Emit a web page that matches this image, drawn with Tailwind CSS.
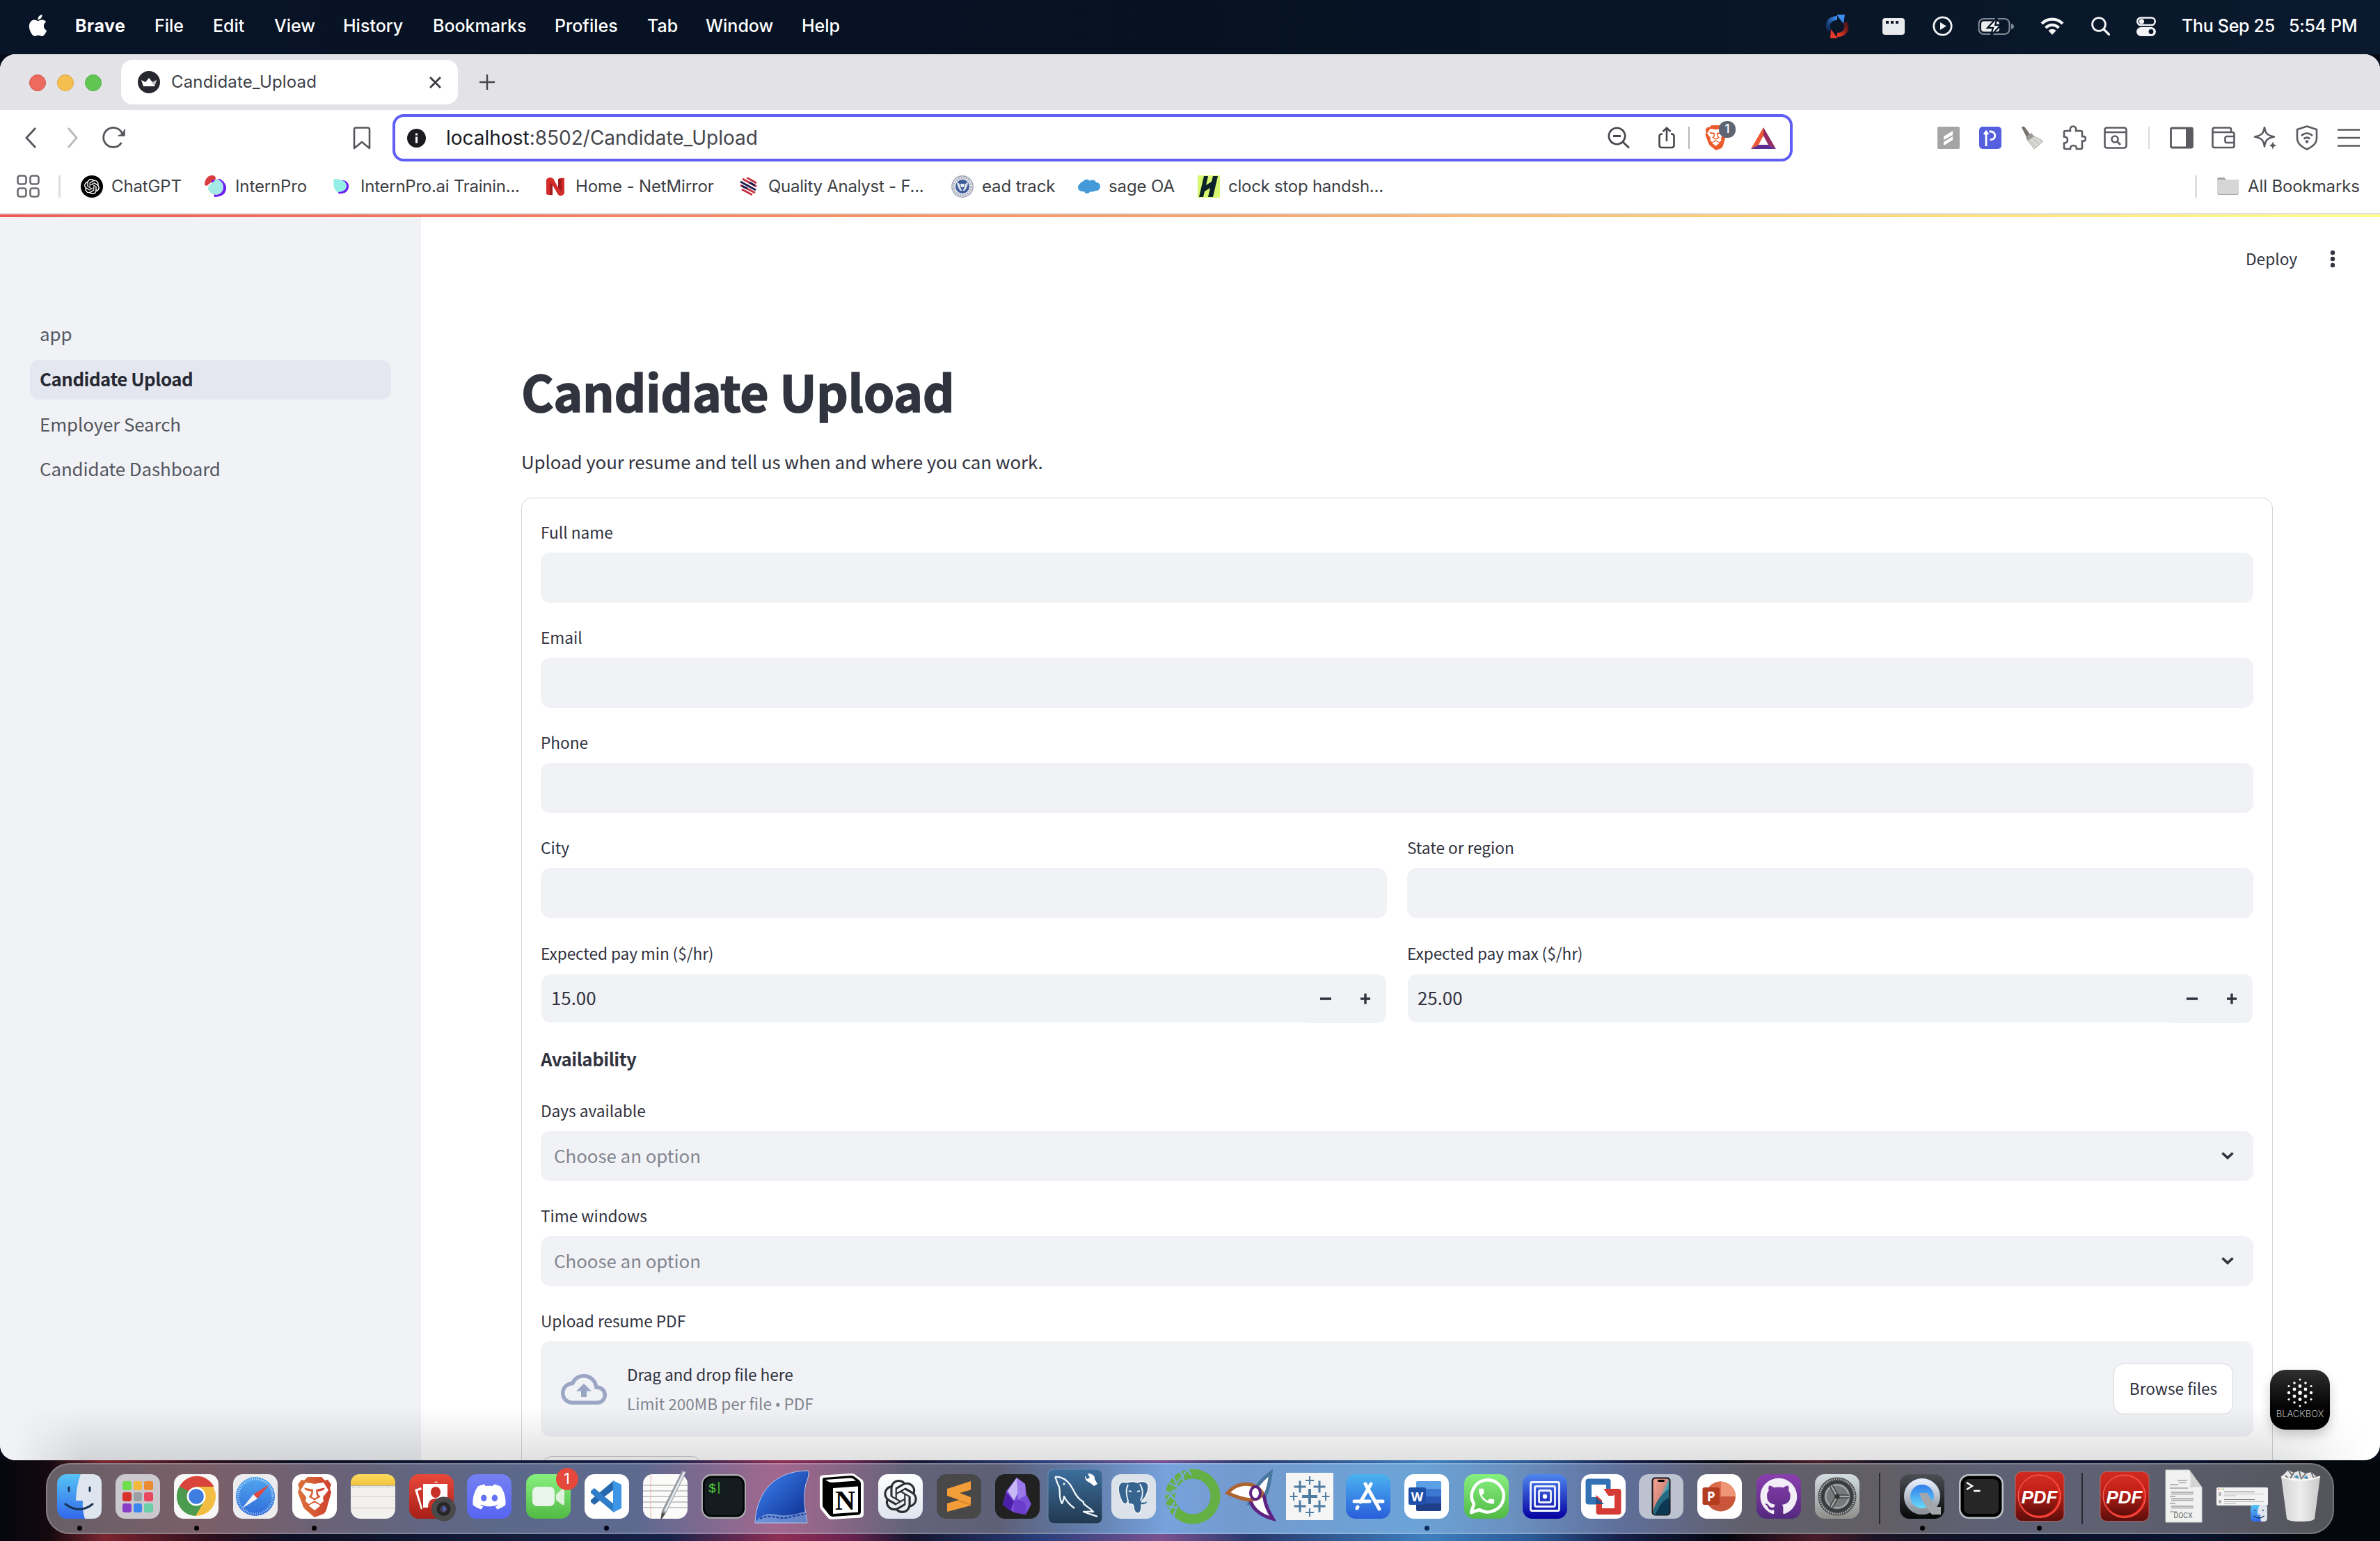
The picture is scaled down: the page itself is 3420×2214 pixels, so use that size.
<!DOCTYPE html>
<html lang="en">
<head>
<meta charset="utf-8">
<title>Candidate_Upload</title>
<script src="https://cdn.jsdelivr.net/npm/@tailwindcss/browser@4"></script>
</head>
<body class="w-[3420px] h-[2214px] overflow-hidden bg-[#070b18] font-['Inter',sans-serif]">
<svg class="absolute size-0" aria-hidden="true">
  <defs>
    <linearGradient id="gFinder" x1="0" y1="0" x2="0" y2="1"><stop offset="0" stop-color="#56c4f6"/><stop offset="1" stop-color="#3268ea"/></linearGradient>
    <linearGradient id="gWhite" x1="0" y1="0" x2="0" y2="1"><stop offset="0" stop-color="#fff"/><stop offset="1" stop-color="#dfe4ee"/></linearGradient>
    <linearGradient id="gRed" x1="0" y1="0" x2="0" y2="1"><stop offset="0" stop-color="#e8483a"/><stop offset="1" stop-color="#a81e18"/></linearGradient>
    <linearGradient id="gPdf" x1="0" y1="0" x2="0" y2="1"><stop offset="0" stop-color="#d22b20"/><stop offset=".4" stop-color="#c02018"/><stop offset="1" stop-color="#5c0d0a"/></linearGradient>
    <linearGradient id="gBlurple" x1="0" y1="0" x2="0" y2="1"><stop offset="0" stop-color="#7480f2"/><stop offset="1" stop-color="#5865f2"/></linearGradient>
    <linearGradient id="gGreen" x1="0" y1="0" x2="0" y2="1"><stop offset="0" stop-color="#86f080"/><stop offset="1" stop-color="#52b944"/></linearGradient>
    <linearGradient id="gStore" x1="0" y1="0" x2="0" y2="1"><stop offset="0" stop-color="#4ab2f0"/><stop offset="1" stop-color="#2a5edb"/></linearGradient>
    <linearGradient id="gVnc" x1="0" y1="0" x2="0" y2="1"><stop offset="0" stop-color="#4f86ee"/><stop offset="1" stop-color="#0500a0"/></linearGradient>
    <linearGradient id="gPurple" x1="0" y1="0" x2="0" y2="1"><stop offset="0" stop-color="#8a3fae"/><stop offset="1" stop-color="#54297f"/></linearGradient>
    <linearGradient id="gSafari" x1="0" y1="0" x2="0" y2="1"><stop offset="0" stop-color="#53a8f0"/><stop offset="1" stop-color="#2f6bd8"/></linearGradient>
    <linearGradient id="gBrave" x1="0" y1="0" x2="1" y2="0"><stop offset="0" stop-color="#d9733a"/><stop offset="1" stop-color="#d0402f"/></linearGradient>
    <linearGradient id="gYellow" x1="0" y1="0" x2="0" y2="1"><stop offset="0" stop-color="#fbdc5e"/><stop offset="1" stop-color="#f3c33c"/></linearGradient>
    <linearGradient id="gShark" x1="0" y1="0" x2="1" y2="1"><stop offset="0" stop-color="#3f86f5"/><stop offset="1" stop-color="#0c2a8c"/></linearGradient>
    <linearGradient id="gSql" x1="0" y1="0" x2="0" y2="1"><stop offset="0" stop-color="#3c6f9e"/><stop offset="1" stop-color="#22384f"/></linearGradient>
    <linearGradient id="gPhone" x1="0" y1="0" x2="1" y2="1"><stop offset="0" stop-color="#f5a393"/><stop offset=".45" stop-color="#d98a80"/><stop offset=".55" stop-color="#49a3b5"/><stop offset="1" stop-color="#0b3350"/></linearGradient>
    <linearGradient id="gSys" x1="0" y1="0" x2="0" y2="1"><stop offset="0" stop-color="#d3dde2"/><stop offset="1" stop-color="#8f8f8b"/></linearGradient>
    <linearGradient id="gQt" x1="0" y1="0" x2="0" y2="1"><stop offset="0" stop-color="#4b4f54"/><stop offset="1" stop-color="#060708"/></linearGradient>
    <linearGradient id="gQr" x1="0" y1="0" x2="0" y2="1"><stop offset="0" stop-color="#e4ecfb"/><stop offset="1" stop-color="#8d9299"/></linearGradient>
    <linearGradient id="gQc" x1="0" y1="0" x2="0" y2="1"><stop offset="0" stop-color="#2a72e8"/><stop offset="1" stop-color="#6fe6fb"/></linearGradient>
    <linearGradient id="gTrash" x1="0" y1="0" x2="1" y2="0"><stop offset="0" stop-color="#d4d4d4"/><stop offset=".5" stop-color="#ededed"/><stop offset="1" stop-color="#c9c9c9"/></linearGradient>
    <linearGradient id="gSyncA" x1="0" y1="1" x2="1" y2="0"><stop offset="0" stop-color="#0c2550"/><stop offset="1" stop-color="#3b8bf0"/></linearGradient>
    <linearGradient id="gSyncB" x1="1" y1="0" x2="0" y2="1"><stop offset="0" stop-color="#4a1214"/><stop offset="1" stop-color="#ef3a26"/></linearGradient>
    <symbol id="knot" viewBox="0 0 24 24"><path d="M22.2819 9.8211a5.9847 5.9847 0 0 0-.5157-4.9108 6.0462 6.0462 0 0 0-6.5098-2.9A6.0651 6.0651 0 0 0 4.9807 4.1818a5.9847 5.9847 0 0 0-3.9977 2.9 6.0462 6.0462 0 0 0 .7427 7.0966 5.98 5.98 0 0 0 .511 4.9107 6.051 6.051 0 0 0 6.5146 2.9001A5.9847 5.9847 0 0 0 13.2599 24a6.0557 6.0557 0 0 0 5.7718-4.2058 5.9894 5.9894 0 0 0 3.9977-2.9001 6.0557 6.0557 0 0 0-.7475-7.0729zm-9.022 12.6081a4.4755 4.4755 0 0 1-2.8764-1.0408l.1419-.0804 4.7783-2.7582a.7948.7948 0 0 0 .3927-.6813v-6.7369l2.02 1.1686a.071.071 0 0 1 .038.052v5.5826a4.504 4.504 0 0 1-4.4945 4.4944zm-9.6607-4.1254a4.4708 4.4708 0 0 1-.5346-3.0137l.142.0852 4.783 2.7582a.7712.7712 0 0 0 .7806 0l5.8428-3.3685v2.3324a.0804.0804 0 0 1-.0332.0615L9.74 19.9502a4.4992 4.4992 0 0 1-6.1408-1.6464zM2.3408 7.8956a4.485 4.485 0 0 1 2.3655-1.9728V11.6a.7664.7664 0 0 0 .3879.6765l5.8144 3.3543-2.0201 1.1685a.0757.0757 0 0 1-.071 0l-4.8303-2.7865A4.504 4.504 0 0 1 2.3408 7.872zm16.5963 3.8558L13.1038 8.364 15.1192 7.2a.0757.0757 0 0 1 .071 0l4.8303 2.7913a4.4944 4.4944 0 0 1-.6765 8.1042v-5.6772a.79.79 0 0 0-.407-.667zm2.0107-3.0231l-.142-.0852-4.7735-2.7818a.7759.7759 0 0 0-.7854 0L9.409 9.2297V6.8974a.0662.0662 0 0 1 .0284-.0615l4.8303-2.7866a4.4992 4.4992 0 0 1 6.6802 4.66zM8.3065 12.863l-2.02-1.1638a.0804.0804 0 0 1-.038-.0567V6.0742a4.4992 4.4992 0 0 1 7.3757-3.4537l-.142.0805L8.704 5.459a.7948.7948 0 0 0-.3927.6813zm1.0976-2.3654l2.602-1.4998 2.6069 1.4998v2.9994l-2.5974 1.4997-2.6067-1.4997Z"/></symbol>
    <symbol id="lion" viewBox="0 0 50 58">
      <path d="M15 0h20l5 5 4-1 5 7-2 5 2 6-7 25c-1 3-2 4-4 6L25 58 12 47c-2-2-3-3-4-6L1 22l2-6-2-5 5-7 4 1z"/>
      <path fill="#fff" d="M12 8l8 1 5 1 5-1 8-1 7 11-8 10 1 6-5 4-8-5-8 5-5-4 1-6-8-10z"/>
      <path d="M10 15.500l11 2-1 3.500-8-2zM40 15.500l-11 2 1 3.500 8-2zM20.500 18h2.500l-.5 7-2 3 4.500 3 4.500-3-2-3-.5-7h2.500l.5 6.500 3.500 4-8.500 5-8.500-5 3.500-4z"/>
      <path fill="#fff" d="M25 36.500l8.500 4.500L25 48l-8.500-7z"/>
    </symbol>
    <symbol id="chev" viewBox="0 0 20 12"><path d="M2.500 2.500 10 9.500l7.500-7" fill="none" stroke="#31333f" stroke-width="3.600" stroke-linecap="butt"/></symbol>
  </defs>
</svg>

<div class="relative flex h-full w-full flex-col">

  <!-- macOS menu bar -->
  <header class="flex h-[78px] w-full shrink-0 items-center bg-linear-to-r from-[#081427] via-[#061222] to-[#0a192d] pb-[9px] text-[25px] leading-none font-medium text-white">
    <div class="w-[108px] pl-[39px] pt-[4px]"><svg class="size-[31px]" viewBox="0 0 24 24" fill="#fff"><path d="M12.152 6.896c-.948 0-2.415-1.078-3.96-1.04-2.04.027-3.91 1.183-4.961 3.014-2.117 3.675-.546 9.103 1.519 12.09 1.013 1.454 2.208 3.09 3.792 3.039 1.52-.065 2.09-.987 3.935-.987 1.831 0 2.35.987 3.96.948 1.637-.026 2.676-1.48 3.676-2.948 1.156-1.688 1.636-3.325 1.662-3.415-.039-.013-3.182-1.221-3.22-4.857-.026-3.04 2.48-4.494 2.597-4.559-1.429-2.09-3.623-2.324-4.39-2.376-2-.156-3.675 1.09-4.61 1.09zM15.53 3.83c.843-1.012 1.4-2.427 1.245-3.83-1.207.052-2.662.805-3.532 1.818-.78.896-1.454 2.338-1.273 3.714 1.338.104 2.715-.688 3.559-1.701"/></svg></div>
    <span class="w-[114px] pt-[5px] font-bold tracking-[0.5px]">Brave</span>
    <span class="w-[84px] pt-[5px]">File</span>
    <span class="w-[88px] pt-[5px]">Edit</span>
    <span class="w-[99px] pt-[5px]">View</span>
    <span class="w-[129px] pt-[5px]">History</span>
    <span class="w-[175px] pt-[5px]">Bookmarks</span>
    <span class="w-[133px] pt-[5px]">Profiles</span>
    <span class="w-[84px] pt-[5px]">Tab</span>
    <span class="w-[138px] pt-[5px]">Window</span>
    <span class="w-[90px] pt-[5px]">Help</span>
    <div class="ml-auto flex items-center pt-[6px]">
      <svg class="mr-[48px] h-[36px] w-[34px]" viewBox="0 0 34 36"><path d="M5 24C1 14 6 6 17 6" fill="none" stroke="url(#gSyncA)" stroke-width="6"/><path d="M16 1l12 0-2 13z" fill="#3d8bee"/><path d="M29 12c4 10-1 18-12 18" fill="none" stroke="url(#gSyncB)" stroke-width="6"/><path d="M18 35l-11 0 1-13z" fill="#e8392a"/></svg>
      <svg class="mr-[40px] h-[26px] w-[32px]" viewBox="0 0 32 26"><rect y="1" width="32" height="24" rx="4" fill="#e9eaec"/><g fill="#0a172a"><rect x="5" y="5" width="4" height="4"/><rect x="12" y="5" width="4" height="4"/><rect x="19" y="5" width="4" height="4"/></g></svg>
      <svg class="mr-[36px] size-[29px]" viewBox="0 0 29 29"><circle cx="14.500" cy="14.500" r="12.700" fill="none" stroke="#f3f4f5" stroke-width="2.800"/><path d="M11 9l9 5.500-9 5.500z" fill="#f3f4f5"/></svg>
      <svg class="mr-[38px] h-[28px] w-[52px]" viewBox="0 0 52 28"><rect x="1.500" y="3" width="44" height="22" rx="7" fill="none" stroke="#7f8893" stroke-width="2.200"/><rect x="5" y="6.500" width="26" height="15" rx="4" fill="#eee"/><path d="M48 10v8c3-1 4-2 4-4s-1-3-4-4z" fill="#7f8893"/><path d="M28 1 14 16h8l-3 11 14-15h-8z" fill="#fff" stroke="#08162a" stroke-width="2.400"/></svg>
      <svg class="mr-[39px] h-[27px] w-[34px]" viewBox="0 0 34 27"><g fill="none" stroke="#f3f4f5" stroke-width="4.200"><path d="M2 10c8-8.500 22-8.500 30 0"/><path d="M7.500 16c5.500-5.500 13.500-5.500 19 0"/></g><path d="M17 26l-5.500-6c3-3 8-3 11 0z" fill="#f3f4f5"/></svg>
      <svg class="mr-[38px] size-[27px]" viewBox="0 0 27 27"><circle cx="11" cy="11" r="9.400" fill="none" stroke="#f3f4f5" stroke-width="2.800"/><path d="M18 18l7.500 7.500" stroke="#f3f4f5" stroke-width="3.200" stroke-linecap="round"/></svg>
      <svg class="mr-[37px] h-[28px] w-[28px]" viewBox="0 0 28 28"><rect x="1.300" y="1.500" width="25.400" height="10.500" rx="5.200" fill="none" stroke="#f3f4f5" stroke-width="2.600"/><circle cx="7.500" cy="6.800" r="3.600" fill="#f3f4f5"/><rect y="15" width="28" height="13" rx="6.500" fill="#f3f4f5"/><circle cx="21" cy="21.500" r="3.400" fill="#08162a"/></svg>
      <span class="w-[154px] tracking-[-0.3px] whitespace-nowrap">Thu Sep 25</span><span class="w-[131px] tracking-[-0.3px] whitespace-nowrap">5:54 PM</span>
    </div>
  </header>

  <!-- Browser window -->
  <div class="relative flex h-[2020px] w-full shrink-0 flex-col overflow-hidden rounded-[22px] bg-white">

    <!-- Tab strip -->
    <div class="flex h-[80px] shrink-0 items-center border-t border-white bg-[#e3e2e7] pl-[42px]">
      <div class="flex w-[132px] gap-[16px]">
        <i class="size-[24px] rounded-full border border-[#d5544a] bg-[#ed6a5e]"></i>
        <i class="size-[24px] rounded-full border border-[#dba63c] bg-[#f4bf4f]"></i>
        <i class="size-[24px] rounded-full border border-[#50b143] bg-[#61c554]"></i>
      </div>
      <div class="-mt-px flex h-[64px] w-[484px] items-center rounded-[16px] bg-white pl-[24px]">
        <svg class="size-[32px]" viewBox="0 0 32 32"><circle cx="16" cy="16" r="16" fill="#26272f"/><path d="M5 13l6 3 5-6 5 6 6-3-3 9H8z" fill="#fff"/><path d="M16 10l5 6 6-3-3 9z" fill="#bdbdbd"/></svg>
        <span class="ml-[16px] w-[371px] text-[24px] tracking-[0.15px] text-[#3e3f45]">Candidate_Upload</span>
        <svg class="size-[17px]" viewBox="0 0 16 16"><path d="M1 1l14 14M15 1 1 15" stroke="#3a3b40" stroke-width="2.600"/></svg>
      </div>
      <svg class="-mt-px ml-[31px] size-[22px]" viewBox="0 0 22 22"><path d="M11 0v22M0 11h22" stroke="#46474c" stroke-width="2.400"/></svg>
    </div>

    <!-- Toolbar -->
    <div class="flex h-[80px] shrink-0 items-center">
      <div class="flex w-[564px] items-center">
        <svg class="ml-[35px] h-[32px] w-[18px]" viewBox="0 0 18 32"><path d="M16 2 3 16l13 14" fill="none" stroke="#55565c" stroke-width="2.800"/></svg>
        <svg class="ml-[43px] h-[32px] w-[18px]" viewBox="0 0 18 32"><path d="M2 2l12 14L2 30" fill="none" stroke="#b9b9bd" stroke-width="2.800"/></svg>
        <svg class="ml-[32px] size-[34px]" viewBox="0 0 34 34"><path d="M28.500 24A14 14 0 1 1 30 12" fill="none" stroke="#55565c" stroke-width="2.800"/><path d="M33 5v9H24q7-1 9-9z" fill="#55565c" stroke="#55565c" stroke-width="1.500" stroke-linejoin="round"/></svg>
        <svg class="ml-[327px] h-[33px] w-[26px]" viewBox="0 0 26 33"><path d="M2 4q0-2.500 2.500-2.500h17Q24 1.500 24 4v27l-11-9-11 9z" fill="none" stroke="#55565c" stroke-width="2.600" stroke-linejoin="round"/></svg>
      </div>
      <div class="flex h-[68px] w-[2012px] shrink-0 items-center rounded-[16px] border-4 border-[#5f5ef5] pl-[17px]">
        <svg class="size-[27px]" viewBox="0 0 27 27"><circle cx="13.500" cy="13.500" r="13.500" fill="#1c1b20"/><path d="M13.500 6.500v3M13.500 11.500v9" stroke="#fff" stroke-width="3"/></svg>
        <span class="ml-[29px] w-[1669px] text-[28px] text-[#45464c]"><span class="text-[#1b1b1f]">localhost</span>:8502/Candidate_Upload</span>
        <svg class="h-[32px] w-[32px]" viewBox="0 0 32 32"><circle cx="13.500" cy="13.500" r="11.700" fill="none" stroke="#46474c" stroke-width="2.600"/><path d="M8 13.500h11M22 22l9 8.500" stroke="#46474c" stroke-width="2.800"/></svg>
        <svg class="ml-[40px] h-[32px] w-[26px]" viewBox="0 0 26 32"><path d="M7 10.500H6Q2.500 10.500 2.500 14v12.500Q2.500 30 6 30h14q3.500 0 3.500-3.500V14q0-3.500-3.500-3.500h-1M13 21V2M7.500 7 13 1.800 18.500 7" fill="none" stroke="#46474c" stroke-width="2.600"/></svg>
        <i class="ml-[18px] h-[32px] w-[2px] bg-[#b9b9bd]"></i>
        <div class="relative ml-[22px] h-[36px] w-[31px]">
          <svg class="h-[36px] w-[31px]" fill="#ec5c2b"><use href="#lion"/></svg>
          <span class="absolute -top-[6px] left-[20px] flex size-[24px] items-center justify-center rounded-[11px] bg-[#5f6472] text-[17px] font-medium text-white">1</span>
        </div>
        <svg class="ml-[35px] h-[31px] w-[36px]" viewBox="0 0 36 31"><path d="M18 0 0 31l11-6 7-13z" fill="#ee5733"/><path d="M18 0l18 31-11-6-7-13z" fill="#932a61"/><path d="M0 31h36l-11-6H11z" fill="#5e2c8e"/></svg>
      </div>
      <div class="flex flex-1 items-center pl-[208px]">
        <svg class="mr-[28px] size-[32px]" viewBox="0 0 32 32"><rect width="32" height="32" rx="2" fill="#a5a5a5"/><path d="M22 6 9 14v5l13-7zM22 14 9 22v5l13-8z" fill="#fff"/></svg>
        <svg class="mr-[27px] size-[32px]" viewBox="0 0 32 32"><rect width="32" height="32" rx="5" fill="#5460de"/><path d="M10 28V9M7 11l3-4 3 4M14.500 7H17a5.800 5.800 0 0 1 0 11.600h-1.500" fill="none" stroke="#fff" stroke-width="2.800"/></svg>
        <svg class="mr-[27px] size-[34px]" viewBox="0 0 34 34"><path d="M2 2q2-3 5 0l7 10-5 4z" fill="#77736c"/><path d="M8 16l8-6 4 5-9 7z" fill="#9b9994"/><path d="M11 21l9-6c5 2 9 4 13 7L20 33c-2-4-6-7-9-12z" fill="#d8d8d4" stroke="#a7a7a3"/><path d="M15 22l7 8M19 19l8 7" stroke="#b4b4af"/></svg>
        <svg class="mr-[25px] h-[36px] w-[34px]" viewBox="0 0 34 36"><path d="M4 8h7c-1-4 1-6.500 4-6.500S20 4 19 8h7q2 0 2 2v6c3.500-.5 5 1 5 3.500S31.500 23 28 22.500V32q0 2-2 2h-6c0-3-1.500-5-4.500-5S11 31 11 34H4q-2 0-2-2v-6.500c3 0 5-1.500 5-4.500s-2-4.500-5-4.500V10q0-2 2-2z" fill="none" stroke="#5a5b61" stroke-width="2.600"/></svg>
        <svg class="mr-[30px] h-[32px] w-[34px]" viewBox="0 0 34 32"><rect x="1.500" y="1.500" width="31" height="29" rx="3" fill="none" stroke="#5a5b61" stroke-width="2.600"/><path d="M2 8h30" stroke="#5a5b61" stroke-width="2.400"/><circle cx="16" cy="18" r="4.500" fill="none" stroke="#5a5b61" stroke-width="2.600"/><path d="M19 21l5 5" stroke="#5a5b61" stroke-width="2.800"/></svg>
        <i class="mr-[29px] h-[32px] w-[2px] bg-[#d9d9de]"></i>
        <svg class="mr-[26px] h-[32px] w-[34px]" viewBox="0 0 34 32"><rect x="1.500" y="2" width="31" height="28" rx="2" fill="none" stroke="#5a5b61" stroke-width="2.800"/><rect x="23" y="2" width="10" height="28" fill="#5a5b61"/></svg>
        <svg class="mr-[26px] h-[32px] w-[34px]" viewBox="0 0 34 32"><path d="M28 8V4q0-2.500-2.500-2.500H4Q1.500 1.500 1.500 4v23Q1.500 30 4 30h26q2.500 0 2.500-2.500v-17Q32.500 8 30 8H4Q1.500 8 1.500 5.500M32 14H22q-2.500 0-2.500 2.500v4Q19.500 23 22 23h10" fill="none" stroke="#5a5b61" stroke-width="2.600"/></svg>
        <svg class="mr-[27px] h-[36px] w-[34px]" viewBox="0 0 34 36"><path d="M16 3c1.500 9 4 11.500 14 13.500-10 2-12.500 4.500-14 14-1.500-9.500-4-12-14-14C12 14.500 14.500 12 16 3z" fill="none" stroke="#5a5b61" stroke-width="2.600" stroke-linejoin="round"/><path d="M28 23c.8 4 2 5.200 6 6-4 .8-5.200 2-6 6-.8-4-2-5.200-6-6 4-.8 5.200-2 6-6z" fill="#5a5b61"/></svg>
        <svg class="mr-[28px] h-[36px] w-[32px]" viewBox="0 0 32 36"><path d="M16 1.500 30 6v12c0 8-5 12-14 16.500C7 30 2 26 2 18V6z" fill="none" stroke="#5a5b61" stroke-width="2.600" stroke-linejoin="round"/><path d="M8 15c5-4.500 11-4.500 16 0M11.500 19.500c3-2.500 6-2.500 9 0" fill="none" stroke="#5a5b61" stroke-width="2.600"/><circle cx="16" cy="23.500" r="2.300" fill="#5a5b61"/></svg>
        <svg class="h-[28px] w-[32px]" viewBox="0 0 32 28"><path d="M0 2.500h32M0 14h32M0 25.500h32" stroke="#5a5b61" stroke-width="2.600"/></svg>
      </div>
    </div>

    <!-- Bookmarks bar -->
    <div class="flex h-[70px] shrink-0 items-center border-b-2 border-[#dfdfe4] pb-[9px] text-[24px] tracking-[-0.12px] whitespace-nowrap text-[#3e3f45]">
      <svg class="ml-[24px] size-[33px]" viewBox="0 0 33 33"><g fill="none" stroke="#6a6b70" stroke-width="2.600"><rect x="1.500" y="1.500" width="12" height="12" rx="3"/><rect x="19.500" y="1.500" width="12" height="12" rx="3"/><rect x="1.500" y="19.500" width="12" height="12" rx="3"/><rect x="19.500" y="19.500" width="12" height="12" rx="3"/></g></svg>
      <i class="ml-[27px] h-[32px] w-[3px] bg-[#dedee3]"></i>
      <svg class="ml-[29px] size-[32px]" viewBox="0 0 32 32"><circle cx="16" cy="16" r="16"/><svg x="5" y="5" width="22" height="22" fill="#fff"><use href="#knot"/></svg></svg>
      <span class="ml-[12px] w-[133px]">ChatGPT</span>
      <svg class="size-[33px]" viewBox="0 0 33 33"><path d="M1 15C1 7 5 1 12 1c4 0 5 3 5 5L4 16z" fill="#dc3b3f"/><path d="M11 8l12-2c6 4 9 8 9 13 0 8-6 13-17 13z" fill="#6c1cf2"/><path d="M6 17 18 6c7 2 10 7 10 12 0 6-4 10-10 11C10 28 5 24 6 17z" fill="#a6eae8"/></svg>
      <span class="ml-[12px] w-[140px]">InternPro</span>
      <svg class="mt-px h-[22px] w-[24px]" viewBox="0 0 24 22"><path d="M10 2c9-1 14 4 13 10-1 7-7 10-15 9z" fill="#6c1cf2"/><path d="M2 0c11 0 18 4 18 10s-6 9-13 9C2 16 0 8 2 0z" fill="#93eee6"/></svg>
      <span class="ml-[16px] w-[266px] tracking-[-0.25px]">InternPro.ai Trainin...</span>
      <svg class="h-[28px] w-[28px]" viewBox="0 0 28 28"><path d="M1 4c2-3 6-4 9-2q2 1 3 4l5 9V3q4-2 9-1v20q0 4-4 5-4 1-6-3L10 12v14q-5 1-9-1z" fill="#d42c2b"/><path d="M18 3v12l-6-11z" fill="#fff"/><path d="M18 3h5v19l-5-7zM10 12v14h-4V8z" fill="#a01b1c"/></svg>
      <span class="ml-[15px] w-[236px]">Home - NetMirror</span>
      <svg class="h-[26px] w-[26px]" viewBox="0 0 26 26"><g stroke-width="2.600"><path d="M10 0l14 8M4 2l20 11" stroke="#c22b40"/><path d="M1 6l22 12" stroke="#171c4c"/><path d="M1 11l21 11M3 17l15 8" stroke="#c22b40"/><path d="M14 7l8 4.500M3 12l8 4" stroke="#171c4c"/></g></svg>
      <span class="ml-[15px] w-[263px] tracking-[-0.25px]">Quality Analyst - F...</span>
      <svg class="size-[32px]" viewBox="0 0 32 32"><circle cx="16" cy="16" r="15.200" fill="#e9e9ee" stroke="#9fa4b4" stroke-width="1.400"/><circle cx="16" cy="16" r="12.500" fill="none" stroke="#9aa2b8" stroke-width="2" stroke-dasharray="2 1.500"/><circle cx="16" cy="16" r="10" fill="#3d5c98"/><path d="M8 10q5 1 5 7l3 6 3-6q0-6 5-7-1 8-5 12h-6q-4-4-5-12z" fill="#dfe3ec"/><path d="M13 12h6l-1 5h-4z" fill="#e9ecf2"/></svg>
      <span class="ml-[12px] w-[138px]">ead track</span>
      <svg class="h-[22px] w-[32px]" viewBox="0 0 32 22"><path d="M7 4c3-4 8-4 10-1 4-3 8-1 9 2 4 0 6 3 6 6 0 4-4 7-8 6-2 2-5 2-6 1-3 4-8 4-9 0-5 1-9-2-9-6 0-2 1-4 3-5 0-1 2-3 4-3z" fill="#449ad8"/></svg>
      <span class="ml-[12px] w-[128px]">sage OA</span>
      <svg class="size-[32px]" viewBox="0 0 32 32"><rect width="32" height="32" fill="#d9f871"/><path d="M9 1h6l-3 13 8-5 2-8h7l-7 30h-7l3-13-8 5-2 8H2z" fill="#0c2229"/></svg>
      <span class="ml-[12px] tracking-[-0.25px]">clock stop handsh...</span>
      <i class="ml-auto h-[32px] w-[3px] bg-[#dedee3]"></i>
      <svg class="ml-[29px] h-[27px] w-[31px]" viewBox="0 0 31 27"><path d="M0 4q0-3 3-3h7l3 3h15q3 0 3 3v16q0 3-3 3H3q-3 0-3-3z" fill="#a4a4a4"/><path d="M0 4h31v18q0 3-3 3H3q-3 0-3-3z" fill="#d6d6d6"/></svg>
      <span class="ml-[13px] w-[190px]">All Bookmarks</span>
    </div>

    <!-- Streamlit page -->
    <div class="h-[4px] shrink-0 bg-linear-to-r from-[#ef5b54] via-[#f4a26d] to-[#ffff8a]"></div>
    <div class="flex min-h-0 flex-1 font-['Noto_Sans_CJK_SC','Source_Sans_Pro',sans-serif] text-[#31333f]">
      <aside class="w-[605px] shrink-0 bg-[#f0f2f6] px-[43px] pt-[140px] text-[25.9px] leading-[54px] tracking-[-0.1px] text-[#545660]">
        <nav class="flex flex-col gap-[7.800px]">
          <a class="h-[57px] pl-[14px]">app</a>
          <a class="h-[57px] rounded-[14px] bg-[#e4e7ef] pl-[14px] font-bold tracking-[-0.5px] text-[#262833]">Candidate Upload</a>
          <a class="h-[57px] pl-[14px]">Employer Search</a>
          <a class="h-[57px] pl-[14px]">Candidate Dashboard</a>
        </nav>
      </aside>
      <main class="flex-1 pl-[144px]">
        <div class="flex h-[104px] items-center pt-[16px]">
          <span class="ml-auto w-[121px] text-[22.7px]">Deploy</span>
          <svg class="mr-[64px] h-[26px] w-[8px]" viewBox="0 0 8 26" fill="#31333f"><circle cx="4" cy="4" r="3.200"/><circle cx="4" cy="13" r="3.200"/><circle cx="4" cy="22" r="3.200"/></svg>
        </div>
        <h1 class="mt-[93px] h-[104px] text-[71.300px] leading-[104px] font-bold tracking-[-0.4px] [-webkit-text-stroke:1.600px_#31333f]">Candidate Upload</h1>
        <p class="mt-[27px] h-[46px] text-[25.900px] leading-[46px] tracking-[-0.07px]">Upload your resume and tell us when and where you can work.</p>
        <form class="mt-[29px] h-[1500px] w-[2517px] rounded-[15px] border border-[#d5d6d9] px-[27px] pt-[28px] text-[22.700px] tracking-[-0.04px]">
          <div class="h-[151px]"><label class="block h-[50px] leading-[41px]">Full name</label><div class="h-[72px] rounded-[14px] bg-[#f0f2f6]"></div></div>
          <div class="h-[151px]"><label class="block h-[50px] leading-[41px]">Email</label><div class="h-[72px] rounded-[14px] bg-[#f0f2f6]"></div></div>
          <div class="h-[151px]"><label class="block h-[50px] leading-[41px]">Phone</label><div class="h-[72px] rounded-[14px] bg-[#f0f2f6]"></div></div>
          <div class="grid h-[151px] grid-cols-2 gap-[29px]">
            <div><label class="block h-[50px] leading-[41px]">City</label><div class="h-[72px] rounded-[14px] bg-[#f0f2f6]"></div></div>
            <div><label class="block h-[50px] leading-[41px]">State or region</label><div class="h-[72px] rounded-[14px] bg-[#f0f2f6]"></div></div>
          </div>
          <div class="grid h-[151px] grid-cols-2 gap-[29px]">
            <div>
              <label class="block h-[52px] leading-[43px] tracking-[-0.1px]">Expected pay min ($/hr)</label>
              <div class="mx-px flex h-[69px] rounded-[13px] bg-[#f0f2f6]">
                <span class="flex-1 pl-[14px] text-[25.900px] leading-[66px]">15.00</span>
                <div class="flex h-[70px] w-[116px] items-center rounded-r-[13px] bg-[#f0f2f6] pl-[21px]">
                  <svg class="h-[16px] w-[16px]" viewBox="0 0 16 16"><path d="M0 8h16" stroke="#31333f" stroke-width="3.600"/></svg>
                  <svg class="ml-[42px] h-[16px] w-[14px]" viewBox="0 0 14 16"><path d="M0 8h14M7 .5v15" stroke="#31333f" stroke-width="3.400"/></svg>
                </div>
              </div>
            </div>
            <div>
              <label class="block h-[52px] leading-[43px] tracking-[-0.1px]">Expected pay max ($/hr)</label>
              <div class="mx-px flex h-[69px] rounded-[13px] bg-[#f0f2f6]">
                <span class="flex-1 pl-[14px] text-[25.900px] leading-[66px]">25.00</span>
                <div class="flex h-[70px] w-[116px] items-center rounded-r-[13px] bg-[#f0f2f6] pl-[21px]">
                  <svg class="h-[16px] w-[16px]" viewBox="0 0 16 16"><path d="M0 8h16" stroke="#31333f" stroke-width="3.600"/></svg>
                  <svg class="ml-[42px] h-[16px] w-[14px]" viewBox="0 0 14 16"><path d="M0 8h14M7 .5v15" stroke="#31333f" stroke-width="3.400"/></svg>
                </div>
              </div>
            </div>
          </div>
          <p class="h-[76px] text-[25.900px] leading-[43px] font-bold tracking-[-0.5px]">Availability</p>
          <div class="h-[151px]"><label class="block h-[50px] leading-[41px]">Days available</label><div class="flex h-[72px] items-center justify-between rounded-[14px] bg-[#f0f2f6] pr-[27px] pl-[19px] text-[25.900px] text-[#83858e]"><span class="mb-[3px] leading-[68px]">Choose an option</span><svg class="mb-[2px] h-[12px] w-[20px]"><use href="#chev"/></svg></div></div>
          <div class="h-[151px]"><label class="block h-[50px] leading-[41px]">Time windows</label><div class="flex h-[72px] items-center justify-between rounded-[14px] bg-[#f0f2f6] pr-[27px] pl-[19px] text-[25.900px] text-[#83858e]"><span class="mb-[3px] leading-[68px]">Choose an option</span><svg class="mb-[2px] h-[12px] w-[20px]"><use href="#chev"/></svg></div></div>
          <label class="block h-[50px] leading-[41px]">Upload resume PDF</label>
          <div class="flex h-[137px] items-center rounded-[14px] bg-[#f0f2f6] pr-[29px] pl-[29px]">
            <svg class="size-[66px]" viewBox="0 0 24 24" fill="#9ba6c4"><path d="M19.35 10.04A7.49 7.49 0 0 0 12 4C9.11 4 6.6 5.640 5.350 8.040A5.994 5.994 0 0 0 0 14c0 3.310 2.690 6 6 6h13c2.760 0 5-2.240 5-5 0-2.640-2.050-4.780-4.650-4.960zM19 18H6c-2.210 0-4-1.790-4-4 0-2.050 1.530-3.760 3.560-3.970l1.070-.11.5-.95A5.469 5.469 0 0 1 12 6c2.620 0 4.880 1.860 5.390 4.430l.3 1.500 1.530.11A2.980 2.980 0 0 1 22 15c0 1.650-1.350 3-3 3zM8 13h2.550v3h2.900v-3H16l-4-4-4 4z"/></svg>
            <div class="ml-[29px] flex-1 pt-[2px] leading-[42.500px]"><div class="tracking-[-0.1px]">Drag and drop file here</div><div class="text-[#83858e]">Limit 200MB per file<span class="mx-[4.500px] font-['Open_Sans']">•</span>PDF</div></div>
            <button type="button" class="h-[73px] w-[172px] rounded-[14px] border border-[#d5d6d9] bg-white pb-px text-center leading-[40px]">Browse files</button>
          </div>
          <div class="mt-[28px] ml-[2px] h-[72px] w-[229px] rounded-[14px] border border-[#c9cacd]"></div>
        </form>
      </main>
    </div>
    <!-- dock shadow over the page -->
    <div class="absolute inset-x-[20px] bottom-0 h-[76px] bg-linear-to-b from-black/0 to-black/12 [mask-image:linear-gradient(to_right,transparent,black_100px,black_3240px,transparent)]"></div>
    <div class="absolute right-[72px] bottom-[44px] flex size-[86px] flex-col items-center rounded-[22px] bg-linear-to-b from-[#303030] to-[#000] pt-[12px] shadow-[0_8px_16px_rgba(0,0,0,.2)]">
      <svg class="h-[42px] w-[38px]" viewBox="0 0 38 42" fill="#fff"><circle cx="19" cy="2" r="1.500"/><circle cx="11" cy="7" r="1.800"/><circle cx="27" cy="7" r="1.800"/><circle cx="3" cy="11.500" r="1.600"/><circle cx="19" cy="11.500" r="2.400"/><circle cx="35" cy="11.500" r="1.600"/><circle cx="11" cy="16" r="2.400"/><circle cx="27" cy="16" r="2.400"/><circle cx="3" cy="21" r="2.200"/><circle cx="19" cy="21" r="2.900"/><circle cx="35" cy="21" r="2.200"/><circle cx="11" cy="26" r="2.400"/><circle cx="27" cy="26" r="2.400"/><circle cx="3" cy="30.500" r="1.600"/><circle cx="19" cy="30.500" r="2.400"/><circle cx="35" cy="30.500" r="1.600"/><circle cx="11" cy="35" r="1.800"/><circle cx="27" cy="35" r="1.800"/><circle cx="19" cy="40" r="1.500"/></svg>
      <span class="text-[13px] leading-[18px] font-light text-[#b8b8b8]">BLACKBOX</span>
    </div>
  </div>

  <!-- Dock over the wallpaper -->
  <div class="flex h-[116px] shrink-0 items-start justify-center bg-[linear-gradient(to_right,#05070e_0px,#14090f_70px,#7c2530_150px,#2e101d_300px,#0c1024_420px,#131a38_700px,#17224a_960px,#8f2f55_1120px,#6a2350_1220px,#141630_1310px,#2b3f7c_1500px,#7a5290_1670px,#26396c_1800px,#3f7fc0_2050px,#2b5a96_2200px,#16204a_2330px,#04060e_2480px,#4a1c2a_2610px,#1a1426_2700px,#0c1128_2900px,#0a1430_3150px,#05070e_3300px)] pt-[4px]">
    <div class="flex h-[102px] w-[3288px] rounded-[34px] border-2 border-white/20 bg-[linear-gradient(to_right,#675f66_0px,#7b5f68_230px,#67637a_440px,#5c6888_640px,#5d6a90_850px,#a3688f_1050px,#8c6686_1130px,#62637b_1240px,#5e6078_1370px,#6079a6_1480px,#77a2dc_1610px,#739ace_1720px,#6ca4d8_1960px,#6a90c0_2110px,#5f6f9b_2260px,#615f6b_2440px,#615e66_2640px,#5e6075_2800px,#5f6072_2960px,#54555b_3288px)] bg-origin-border pl-[4px]">

      <!-- Finder -->
      <div class="flex w-[84.200px] flex-col items-center pt-[14px]">
        <svg class="size-[64px] overflow-visible" viewBox="0 0 64 64"><rect width="64" height="64" rx="14" fill="url(#gFinder)"/><path d="M34 0h16q14 0 14 14v36q0 14-14 14H40q-4-12-3-26H27Q28 15 34 0z" fill="#dfe5ee"/><g stroke="#163556" stroke-width="3" stroke-linecap="round" fill="none"><path d="M17 19v5M47 19v5" /><path d="M12 43q20 15 39 0"/></g></svg>
        <i class="mt-[10px] size-[7px] rounded-full bg-black"></i>
      </div>
      <!-- Launchpad -->
      <div class="flex w-[84.200px] flex-col items-center pt-[14px]">
        <svg class="size-[64px]" viewBox="0 0 64 64"><rect width="64" height="64" rx="14" fill="#cbc9ce"/><rect x="10" y="10" width="13" height="13" rx="3" fill="#6ede4c"/><rect x="26" y="10" width="12" height="13" rx="3" fill="#f4b83a"/><rect x="41" y="10" width="13" height="13" rx="3" fill="#eb8b33"/><rect x="10" y="26" width="13" height="13" rx="3" fill="#d6312a"/><rect x="26" y="26" width="12" height="13" rx="3" fill="#9ca0a4"/><rect x="41" y="26" width="13" height="13" rx="3" fill="#ea4761"/><rect x="10" y="42" width="13" height="13" rx="3" fill="#8a3fc8"/><rect x="26" y="42" width="12" height="13" rx="3" fill="#3b87f2"/><rect x="41" y="42" width="13" height="13" rx="3" fill="#6bcfa6"/></svg>
      </div>
      <!-- Chrome -->
      <div class="flex w-[84.200px] flex-col items-center pt-[14px]">
        <svg class="size-[64px]" viewBox="0 0 64 64"><rect width="64" height="64" rx="14" fill="#f7f7f7"/><circle cx="32" cy="32" r="28" fill="#f2be42"/><path d="M32 32 8 17.500A28 28 0 0 0 31 60l13-22z" fill="#4a9a50"/><path d="M8 17.500A28 28 0 0 1 57.500 18H32L20 38z" fill="#d9453a"/><path d="M8 17.500 20 38l8-10z" fill="#4a9a50"/><circle cx="32" cy="32" r="13.500" fill="#fff"/><circle cx="32" cy="32" r="10.800" fill="#3f7de0"/></svg>
        <i class="mt-[10px] size-[7px] rounded-full bg-black"></i>
      </div>
      <!-- Safari -->
      <div class="flex w-[84.200px] flex-col items-center pt-[14px]">
        <svg class="size-[64px]" viewBox="0 0 64 64"><rect width="64" height="64" rx="14" fill="#ececee"/><circle cx="32" cy="32" r="28" fill="url(#gSafari)"/><circle cx="32" cy="32" r="25" fill="none" stroke="#cfe2fa" stroke-width="3" stroke-dasharray="1 2.200"/><path d="M52 15 35 35l-6-6z" fill="#e2453c"/><path d="M13 49l16-20 6 6z" fill="#f3f3f3"/></svg>
      </div>
      <!-- Brave -->
      <div class="flex w-[84.200px] flex-col items-center pt-[14px]">
        <svg class="size-[64px] translate-x-px" viewBox="0 0 64 64"><rect width="64" height="64" rx="14" fill="#fff"/><svg x="7" y="4" width="50" height="58" fill="url(#gBrave)"><use href="#lion"/></svg></svg>
        <i class="mt-[10px] size-[7px] translate-x-px rounded-full bg-black"></i>
      </div>
      <!-- Notes -->
      <div class="flex w-[84.200px] flex-col items-center pt-[14px]">
        <svg class="size-[64px] translate-x-px" viewBox="0 0 64 64"><rect width="64" height="64" rx="14" fill="#f2f1ed"/><path d="M0 16v-2Q0 0 14 0h36q14 0 14 14v2z" fill="url(#gYellow)"/><path d="M0 16.500h64" stroke="#b7b4a8" stroke-width="1.500"/><path d="M2 19.500h60" stroke="#bbb" stroke-dasharray="1 1.500"/><path d="M0 32h64M0 48.500h64" stroke="#d6d6d6" stroke-width="1.500"/></svg>
      </div>
      <!-- Photo Booth -->
      <div class="flex w-[84.200px] flex-col items-center pt-[14px]">
        <svg class="size-[64px] translate-x-px overflow-visible" viewBox="0 0 64 64"><rect width="64" height="64" rx="14" fill="url(#gRed)"/><path d="M8 22l9-3 1 3-6 2 7 25-2 2z" fill="#fff"/><path d="M20 14h35v34H20z" fill="#fff"/><ellipse cx="38" cy="26" rx="7" ry="8" fill="#c93128"/><path d="M27 48c0-10 5-13 11-13s11 3 11 13z" fill="#c93128"/><path d="M35 12q4-3 7 0z" fill="#fff"/><circle cx="49.500" cy="50" r="17.500" fill="#4a4a4b"/><circle cx="49.500" cy="50" r="10" fill="#262628"/><circle cx="49.500" cy="50" r="5" fill="#4a3f5c"/><path d="M49 45l4 5-4 4z" fill="#4a6cc8"/></svg>
      </div>
      <!-- Discord -->
      <div class="flex w-[84.200px] flex-col items-center pt-[14px]">
        <svg class="size-[64px]" viewBox="0 0 64 64"><rect width="64" height="64" rx="14" fill="url(#gBlurple)"/><path transform="translate(8.500 9) scale(1.960)" fill="#fff" d="M20.317 4.3698a19.7913 19.7913 0 00-4.8851-1.5152.0741.0741 0 00-.0785.0371c-.211.3753-.4447.8648-.6083 1.2495-1.8447-.2762-3.68-.2762-5.4868 0-.1636-.3933-.4058-.8742-.6177-1.2495a.077.077 0 00-.0785-.037 19.7363 19.7363 0 00-4.8852 1.515.0699.0699 0 00-.0321.0277C.5334 9.0458-.319 13.5799.0992 18.0578a.0824.0824 0 00.0312.0561c2.0528 1.5076 4.0413 2.4228 5.9929 3.0294a.0777.0777 0 00.0842-.0276c.4616-.6304.8731-1.2952 1.226-1.9942a.076.076 0 00-.0416-.1057c-.6528-.2476-1.2743-.5495-1.8722-.8923a.077.077 0 01-.0076-.1277c.1258-.0943.2517-.1923.3718-.2914a.0743.0743 0 01.0776-.0105c3.9278 1.7933 8.18 1.7933 12.0614 0a.0739.0739 0 01.0785.0095c.1202.099.246.1981.3728.2924a.077.077 0 01-.0066.1276 12.2986 12.2986 0 01-1.873.8914.0766.0766 0 00-.0407.1067c.3604.698.7719 1.3628 1.225 1.9932a.076.076 0 00.0842.0286c1.961-.6067 3.9495-1.5219 6.0023-3.0294a.077.077 0 00.0313-.0552c.5004-5.177-.8382-9.6739-3.5485-13.6604a.061.061 0 00-.0312-.0286zM8.02 15.3312c-1.1825 0-2.1569-1.0857-2.1569-2.419 0-1.3332.9555-2.4189 2.157-2.4189 1.2108 0 2.1757 1.0952 2.1568 2.419 0 1.3332-.9555 2.4189-2.1569 2.4189zm7.9748 0c-1.1825 0-2.1569-1.0857-2.1569-2.419 0-1.3332.9554-2.4189 2.1569-2.4189 1.2108 0 2.1757 1.0952 2.1568 2.419 0 1.3332-.946 2.4189-2.1568 2.4189Z"/></svg>
      </div>
      <!-- FaceTime -->
      <div class="relative flex w-[84.200px] flex-col items-center pt-[14px]">
        <svg class="size-[64px]" viewBox="0 0 64 64"><rect width="64" height="64" rx="14" fill="url(#gGreen)"/><rect x="9" y="18" width="32" height="28" rx="7" fill="#e9f5e8"/><path d="M43 29l9-8q3-1 3 2v19q0 3-3 2l-9-7z" fill="#dff0dd"/></svg>
        <span class="absolute top-[5px] left-[53px] flex size-[32px] items-center justify-center rounded-full bg-[#e4493b] text-[21px] text-white">1</span>
      </div>
      <!-- VS Code -->
      <div class="flex w-[84.200px] flex-col items-center pt-[14px]">
        <svg class="size-[64px]" viewBox="0 0 64 64"><rect width="64" height="64" rx="14" fill="#fff"/><path d="M42 9v13L14 44l-5-4v-3z" fill="#2668ad"/><path d="M9 24l5-4 28 23v12L9 27z" fill="#2f7cc8"/><path d="M41 9l12 6v34l-12 6z" fill="#3d95e6"/></svg>
        <i class="mt-[10px] size-[7px] rounded-full bg-[#000018]"></i>
      </div>
      <!-- TextEdit -->
      <div class="flex w-[84.200px] flex-col items-center pt-[14px]">
        <svg class="size-[64px] overflow-visible" viewBox="0 0 64 64"><rect width="64" height="64" rx="14" fill="#fbfbfa"/><path d="M0 16h64M0 24h64M0 32h64M0 40h64M0 48h64" stroke="#b9b9b9" stroke-width="1.300"/><path d="M11 0v64" stroke="#e8b9ae"/><path d="M25 67l2-14L56-5l6 2-28 57z" fill="#8e959c"/><path d="M30 53 58-4l3 1-28 57z" fill="#dfe4e8"/><path d="M25 67l2-12 5 2z" fill="#54524f"/></svg>
      </div>
      <!-- iTerm -->
      <div class="flex w-[84.200px] flex-col items-center pt-[14px]">
        <svg class="size-[64px]" viewBox="0 0 64 64"><rect width="64" height="64" rx="14" fill="#a9adb0"/><rect x="2" y="2.500" width="60" height="59" rx="12" fill="#000"/><rect x="4.500" y="5" width="55" height="54" rx="10" fill="#141c20"/><text x="10" y="26" font-family="Liberation Mono" font-size="18" fill="#58d63c">$</text><path d="M25 11v17" stroke="#3a9a30" stroke-width="2.200"/></svg>
      </div>
      <!-- Wireshark -->
      <div class="flex w-[84.200px] flex-col items-center pt-[14px]">
        <svg class="size-[64px] overflow-visible" viewBox="0 0 64 64"><path d="M-7 70C-5 25 22-5 69-5 71 -2 70 4 66 14 62 32 64 50 68 70z" fill="url(#gShark)" stroke="#b9c8e8" stroke-width="1"/><path d="M-6 68c14-16 24-10 36-9s24-2 36-6l2 17H-6z" fill="#a9c4ef" opacity=".55"/><path d="M0 64c14-8 28 2 42-2s16-3 24-5" fill="none" stroke="#16389c" stroke-width="2" stroke-dasharray="4 2"/></svg>
      </div>
      <!-- Notion -->
      <div class="flex w-[84.200px] flex-col items-center pt-[14px]">
        <svg class="size-[64px] overflow-visible" viewBox="0 0 64 64"><path d="M1 6q0-4 4-4.500L46-1q3 0 5 1l11 8q2 2 2 5v44q0 5-5 5.500L17 65q-3 0-5-3L3 51q-2-3-2-6z" fill="#fff"/><path d="M5 8q-.5-3 3-3l37-3q3 0 5 1l8 6q2 2 2 4v41q0 4-4 4.500L20 61q-3 0-5-2L7 49q-2-2-2-4z"/><path d="M9 8l35-2.500q3 0 5 1l4 3-34 2.500q-3 0-5-1z" fill="#fff"/><path d="M20 20l36-2.500v37L20 57z" fill="#fff"/><text x="23" y="51" font-family="Liberation Serif" font-weight="700" font-size="40" textLength="29" lengthAdjust="spacingAndGlyphs">N</text></svg>
      </div>
      <!-- ChatGPT -->
      <div class="flex w-[84.200px] flex-col items-center pt-[14px]">
        <svg class="size-[64px] translate-x-px" viewBox="0 0 64 64"><rect width="64" height="64" rx="14" fill="url(#gWhite)"/><svg x="8" y="8" width="48" height="48" fill="#2a2e33"><use href="#knot"/></svg></svg>
      </div>
      <!-- Sublime Text -->
      <div class="flex w-[84.200px] flex-col items-center pt-[14px]">
        <svg class="size-[64px] translate-x-px" viewBox="0 0 64 64"><rect width="64" height="64" rx="14" fill="#484848"/><path d="M15 21 49 10v12.500L33 27l16 6v12L15 54V42l17-5-17-6z" fill="#f39d38"/><path d="M32 37l17 6v2l-20-7z" fill="#d9832a"/></svg>
      </div>
      <!-- Obsidian -->
      <div class="flex w-[84.200px] flex-col items-center pt-[14px]">
        <svg class="size-[64px] translate-x-px" viewBox="0 0 64 64"><rect width="64" height="64" rx="14" fill="#212121"/><path d="M31 5 43 14l2 15 7 14-8 15-17-3L11 44l5-20z" fill="#7a4fd8"/><path d="M31 5 18 24l9 14 6-12z" fill="#c9b8f8"/><path d="M31 5l12 9 1 16-11 7z" fill="#9a78ea"/><path d="M16 26l11 13-5 14-11-9z" fill="#4b1fa8"/><path d="M27 38c8-2 14 0 17 6v14l-17-3z" fill="#6a3cc9"/></svg>
      </div>
      <!-- MySQL Workbench -->
      <div class="flex w-[84.200px] flex-col items-center pt-[14px]">
        <svg class="size-[64px] overflow-visible" viewBox="0 0 64 64"><rect x="-7" y="-7" width="78" height="78" rx="8" fill="url(#gSql)" stroke="#6b8cae"/><path d="M3 4c12-1 20 6 26 18 4 9 8 14 15 18-2 4 10 8 14 14-6-1-10 0-14 0 8 3 15 5 20 7M3 4c3 5 2 8 6 14 2 8-1 16 4 24 2-4 3-8 3-10 4 8 8 12 15 17" fill="none" stroke="#f1f6fa" stroke-width="2.300" stroke-linejoin="round"/><circle cx="16" cy="14" r="1.500" fill="#fff"/><path d="M50-1l3 6-4 2-3-5c0 6 3 9 7 10l6 5 5-3-4-7c1-4-3-8-10-8z" fill="#fff"/></svg>
      </div>
      <!-- PostgreSQL -->
      <div class="flex w-[84.200px] flex-col items-center pt-[14px]">
        <svg class="size-[64px]" viewBox="0 0 64 64"><rect width="64" height="64" rx="14" fill="#dbe2e9"/><path d="M22 12C13 9 8 15 11 28c3 11 6 16 10 15l3-4c0 8 8 0 8 8 0 9 9 14 11 3 1-6-1-10 2-13 5-3 9-16 8-21-2-6-10-7-15-4-5-2-11-2-16 0z" fill="#376590" stroke="#f3f6f9" stroke-width="1.500"/><path d="M24 15c-4 8-2 16 0 24M41 14c5 8 5 16 1 24M25 24l4 1M37 25l4-1" fill="none" stroke="#e8eef4" stroke-width="2"/><path d="M41 40c5 2 9 0 11-1-2 4-6 5-10 4z" fill="#376590"/></svg>
      </div>
      <!-- Anaconda -->
      <div class="flex w-[84.200px] flex-col items-center pt-[14px]">
        <svg class="size-[64px] overflow-visible" viewBox="0 0 64 64"><circle cx="32" cy="32" r="32.500" fill="none" stroke="#64b045" stroke-width="14"/><path d="M-7 24 8 38M-8 40 9 22M-3 12l16 8M4 3l7 17M14-5l6 16M10 12 24-6M24-7l6 8M-6 46l16 2M-3 54 6 40M4 62l5-16M-7 30l14-8" stroke="#7aa5dc" stroke-width="2.400"/></svg>
      </div>
      <!-- Nsight -->
      <div class="flex w-[84.200px] flex-col items-center pt-[14px]">
        <svg class="size-[64px] -translate-x-[3px] overflow-visible" viewBox="0 0 64 64"><path d="M63-2C52 6 38 20 32 42c14 4 26-2 31-44z" fill="#fff" stroke="#47789f" stroke-width="5"/><path d="M34 28c10-6 18-2 20 6 1 10 6 20 12 30C50 60 30 48 34 28z" fill="#fff" stroke="#5d2383" stroke-width="5"/><path d="M1 27c14-16 38-18 50 0-4 12-20 14-50 0z" fill="#fff" stroke="#ac6430" stroke-width="5"/><ellipse cx="41" cy="27" rx="7" ry="9" fill="#fff" stroke="#5d2383" stroke-width="4"/></svg>
      </div>
      <!-- Tableau -->
      <div class="flex w-[84.200px] flex-col items-center pt-[14px]">
        <svg class="size-[64px] overflow-visible" viewBox="0 0 64 64"><rect x="-2" y="-2" width="68" height="68" fill="#f5f5f5"/><g stroke="#4f7ca3" fill="none"><path d="M32 21v22M21 32h22" stroke-width="4"/><path d="M18 9.500v17M9.500 18h17M46 9.500v17M37.500 18h17M18 37.500v17M9.500 46h17M46 37.500v17M37.500 46h17" stroke-width="3"/><path d="M32 3v12M26 9h12M32 49v12M26 55h12M9 26v12M3.500 32h11M55 26v12M49.500 32h11" stroke-width="2"/></g></svg>
      </div>
      <!-- App Store -->
      <div class="flex w-[84.200px] flex-col items-center pt-[14px]">
        <svg class="size-[64px]" viewBox="0 0 64 64"><rect width="64" height="64" rx="14" fill="url(#gStore)"/><g stroke="#fff" stroke-width="5" stroke-linecap="round"><path d="M36 14 21 40M28 14l20 36M12 39h22M43 39h10M17 47l-1 2"/></g></svg>
      </div>
      <!-- Word -->
      <div class="flex w-[84.200px] flex-col items-center pt-[14px]">
        <svg class="size-[64px]" viewBox="0 0 64 64"><rect width="64" height="64" rx="14" fill="#fff"/><path d="M17 21V12q0-2 2-2h32q2 0 2 2v9z" fill="#5ba0e6"/><path d="M17 21h36v11H17z" fill="#3c78d0"/><path d="M17 32h36v10H17z" fill="#2a57b4"/><path d="M17 42h36v9q0 2-2 2H19q-2 0-2-2z" fill="#1e3f87"/><rect x="6" y="19" width="25" height="25" rx="2.500" fill="#1f50a9"/><text x="18.500" y="38.500" text-anchor="middle" font-family="Open Sans" font-weight="700" font-size="18" fill="#fff">W</text></svg>
        <i class="mt-[10px] size-[7px] rounded-full bg-[#0b2a5c]"></i>
      </div>
      <!-- WhatsApp -->
      <div class="flex w-[84.200px] flex-col items-center pt-[14px]">
        <svg class="size-[64px] translate-x-px" viewBox="0 0 64 64"><rect width="64" height="64" rx="14" fill="url(#gGreen)"/><path d="M10 55l4-12a23 23 0 1 1 8 8z" fill="none" stroke="#fff" stroke-width="4.500" stroke-linejoin="round"/><path transform="translate(17.500 17) scale(1.220)" d="M6.620 10.790c1.440 2.830 3.760 5.140 6.590 6.590l2.200-2.200c.27-.27.67-.36 1.020-.24 1.120.37 2.330.57 3.570.57.550 0 1 .450 1 1V20c0 .550-.450 1-1 1-9.390 0-17-7.610-17-17 0-.550.450-1 1-1h3.500c.550 0 1 .450 1 1 0 1.250.2 2.450.570 3.570.11.35.03.740-.250 1.020l-2.200 2.200z" fill="#fff"/></svg>
      </div>
      <!-- Nested squares -->
      <div class="flex w-[84.200px] flex-col items-center pt-[14px]">
        <svg class="size-[64px] translate-x-px" viewBox="0 0 64 64"><rect width="64" height="64" rx="14" fill="url(#gVnc)"/><g fill="none" stroke="#eef2ff" stroke-width="2.800"><rect x="11.500" y="11.500" width="41" height="41" rx="2"/><rect x="17.500" y="17.500" width="29" height="29" rx="2"/><rect x="23.500" y="23.500" width="17" height="17" rx="2"/></g><circle cx="32" cy="32" r="3.200" fill="#fff"/></svg>
      </div>
      <!-- Virtual machine viewer -->
      <div class="flex w-[84.200px] flex-col items-center pt-[14px]">
        <svg class="size-[64px] translate-x-px" viewBox="0 0 64 64"><rect width="64" height="64" rx="14" fill="#fff"/><rect x="6.500" y="6.500" width="36" height="37" rx="4" fill="#3272b4"/><rect x="15" y="15" width="21" height="18" fill="#fff"/><rect x="21.500" y="21" width="36" height="37" rx="4" fill="#d33b34"/><path d="M30 31h18v18H30z" fill="#fff"/><path d="M15 15h13l14 20 6-6v20H30l6-6-21-19z" fill="#fff"/><path d="M21 33l12 10H21z" fill="#24558e"/></svg>
      </div>
      <!-- iPhone Mirroring -->
      <div class="flex w-[84.200px] flex-col items-center pt-[14px]">
        <svg class="size-[64px]" viewBox="0 0 64 64"><rect width="64" height="64" rx="14" fill="#bcc2cf"/><rect x="18.500" y="4.500" width="27" height="55" rx="5" fill="#15171b"/><rect x="20.500" y="6.500" width="23" height="51" rx="3.500" fill="url(#gPhone)"/><path d="M43 22v32q0 3-3 3.500H21V51c4-12 12-24 22-29z" fill="#236a80"/><path d="M43 34v20q0 3-3 3.500H24c4-10 10-20 19-23.500z" fill="#0d3854"/><rect x="27" y="8" width="10" height="3" rx="1.500"/></svg>
      </div>
      <!-- PowerPoint -->
      <div class="flex w-[84.200px] flex-col items-center pt-[14px]">
        <svg class="size-[64px]" viewBox="0 0 64 64"><rect width="64" height="64" rx="14" fill="#fff"/><circle cx="33.500" cy="32" r="21.500" fill="#c9553a"/><path d="M33.500 10.500A21.500 21.500 0 0 1 55 32H33.500z" fill="#ee9676"/><path d="M33.500 10.500A21.500 21.500 0 0 0 12 32h21.500z" fill="#dc6b4a"/><rect x="7.500" y="19" width="24.500" height="25" rx="2.500" fill="#b33d1e"/><text x="19.700" y="38.500" text-anchor="middle" font-family="Open Sans" font-weight="700" font-size="19" fill="#fff">P</text></svg>
      </div>
      <!-- GitHub Desktop -->
      <div class="flex w-[84.200px] flex-col items-center pt-[14px]">
        <svg class="size-[64px]" viewBox="0 0 64 64"><rect width="64" height="64" rx="14" fill="url(#gPurple)"/><path transform="translate(5.500 5) scale(2.200)" fill="#f2edf6" d="M12 .297c-6.630 0-12 5.373-12 12 0 5.303 3.438 9.800 8.205 11.385.6.113.82-.258.82-.577 0-.285-.01-1.040-.015-2.040-3.338.724-4.042-1.610-4.042-1.610C4.422 18.070 3.633 17.700 3.633 17.700c-1.087-.744.084-.729.084-.729 1.205.084 1.838 1.236 1.838 1.236 1.070 1.835 2.809 1.305 3.495.998.108-.776.417-1.305.76-1.605-2.665-.3-5.466-1.332-5.466-5.930 0-1.310.465-2.380 1.235-3.220-.135-.303-.54-1.523.105-3.176 0 0 1.005-.322 3.300 1.230.96-.267 1.980-.399 3-.405 1.020.006 2.040.138 3 .405 2.280-1.552 3.285-1.230 3.285-1.230.645 1.653.24 2.873.12 3.176.765.84 1.230 1.910 1.230 3.220 0 4.610-2.805 5.625-5.475 5.920.42.36.81 1.096.81 2.220 0 1.606-.015 2.896-.015 3.286 0 .315.21.69.825.57C20.565 22.092 24 17.592 24 12.297c0-6.627-5.373-12-12-12"/></svg>
      </div>
      <!-- System Settings -->
      <div class="flex w-[84.200px] flex-col items-center pt-[14px]">
        <svg class="size-[64px]" viewBox="0 0 64 64"><rect width="64" height="64" rx="14" fill="url(#gSys)"/><circle cx="32" cy="32" r="27.500" fill="#4a4b4c"/><circle cx="32" cy="32" r="25" fill="none" stroke="#b9babb" stroke-width="2.500" stroke-dasharray="1.600 1.600"/><circle cx="32" cy="32" r="20.500" fill="#77797a" stroke="#3a3b3c" stroke-width="4"/><circle cx="32" cy="32" r="16.500" fill="#77797a" stroke="#a9abac" stroke-width="2"/><path d="M32 32h17M32 32l-8.500-15M32 32l-8.500 15" stroke="#3f4041" stroke-width="5.500"/><path d="M32 32h17M32 32l-8.500-15M32 32l-8.500 15" stroke="#a9abac" stroke-width="2.500"/><circle cx="32" cy="32" r="3.500" fill="#333"/></svg>
      </div>

      <i class="mx-[18.500px] mt-[12px] h-[74px] w-[2px] bg-[#2b2b33]"></i>

      <!-- QuickTime Player -->
      <div class="flex w-[84px] flex-col items-center pt-[14px]">
        <svg class="size-[64px] -translate-x-px" viewBox="0 0 64 64"><rect width="64" height="64" rx="14" fill="url(#gQt)"/><circle cx="32" cy="32" r="21.500" fill="url(#gQc)" stroke="url(#gQr)" stroke-width="9"/><path d="M28 27h11l13 20h7v11H46L32 38z" fill="#a3a7ac"/></svg>
        <i class="mt-[10px] size-[7px] rounded-full bg-black"></i>
      </div>
      <!-- Terminal -->
      <div class="flex w-[84px] flex-col items-center pt-[14px]">
        <svg class="size-[64px]" viewBox="0 0 64 64"><rect width="64" height="64" rx="14" fill="#b9c2c6"/><rect x="2.500" y="2.500" width="59" height="59" rx="12" fill="#000"/><rect x="7" y="7" width="50" height="50" rx="7" fill="#262626"/><path d="M11 12l8 5-8 5M21 24h9.500" fill="none" stroke="#fff" stroke-width="2.400"/></svg>
      </div>
      <!-- PDF reader -->
      <div class="flex w-[84px] flex-col items-center pt-[14px]">
        <svg class="size-[64px] overflow-visible" viewBox="0 0 64 64"><rect x="-3" y="-3.500" width="70" height="71" rx="9" fill="url(#gPdf)" stroke="#c9726c" stroke-width=".8"/><circle cx="32" cy="32" r="31" fill="#ee2a20"/><circle cx="31" cy="31" r="28.500" fill="url(#gPdf)"/><circle cx="31.500" cy="31.500" r="30.500" fill="none" stroke="#f08a80" stroke-width=".8"/><text x="31.500" y="42" text-anchor="middle" textLength="52" lengthAdjust="spacingAndGlyphs" font-family="Liberation Sans" font-weight="700" font-style="italic" font-size="25" fill="#fff">PDF</text></svg>
        <i class="mt-[10px] size-[7px] rounded-full bg-black"></i>
      </div>

      <i class="mx-[18px] mt-[12px] h-[74px] w-[2px] bg-[#2b2b33]"></i>

      <!-- Recent PDF -->
      <div class="flex w-[84px] flex-col items-center pt-[14px]">
        <svg class="size-[64px] overflow-visible" viewBox="0 0 64 64"><rect x="-3" y="-3.500" width="70" height="71" rx="9" fill="url(#gPdf)" stroke="#c9726c" stroke-width=".8"/><circle cx="32" cy="32" r="31" fill="#ee2a20"/><circle cx="31" cy="31" r="28.500" fill="url(#gPdf)"/><circle cx="31.500" cy="31.500" r="30.500" fill="none" stroke="#f08a80" stroke-width=".8"/><text x="31.500" y="42" text-anchor="middle" textLength="52" lengthAdjust="spacingAndGlyphs" font-family="Liberation Sans" font-weight="700" font-style="italic" font-size="25" fill="#fff">PDF</text></svg>
      </div>
      <!-- DOCX document -->
      <div class="flex w-[84px] flex-col items-center pt-[14px]">
        <svg class="size-[64px] translate-x-px overflow-visible" viewBox="0 0 64 64"><path d="M6-6h34l18 25v50H6z" fill="#f1f1f1" stroke="#cfcfcf"/><path d="M40-6l18 25q-9-2-17 1 2-14-1-26z" fill="#d5d5d5"/><path d="M23 9h14M25 12h10M12 15h12M12 20h26M14 26h32M14 28.500h32M12 32h8M14 35h32M14 37.500h32M12 42h8M14 46h32M14 48.500h32M12 54h10" stroke="#a3a3a3" stroke-width="1.300"/><text x="31" y="63" text-anchor="middle" font-family="Inter" font-size="10" textLength="27" lengthAdjust="spacingAndGlyphs" fill="#555">DOCX</text></svg>
      </div>
      <!-- Minimised Finder window -->
      <div class="flex w-[84px] flex-col items-center pt-[14px]">
        <svg class="size-[64px] translate-x-px overflow-visible" viewBox="0 0 64 64"><rect x="-5" y="19" width="74" height="26" rx="2" fill="#f3f3f4"/><circle cx="-2" cy="21.500" r="1" fill="#ed6a5e"/><circle cx="1.500" cy="21.500" r="1" fill="#f4bf4f"/><circle cx="5" cy="21.500" r="1" fill="#61c554"/><path d="M6 25.500h44M6 36.500h44" stroke="#777" stroke-width="1.200"/><path d="M6 28.500h57M6 31h17M6 39.500h57M6 42.500h17" stroke="#bbb" stroke-width="1"/><path d="M0 26v5M0 37v5" stroke="#aaa" stroke-width="3"/><rect x="44" y="44" width="24" height="24" rx="5" fill="url(#gFinder)"/><path d="M57 44h6q5 0 5 5v14q0 5-5 5h-4q-1-4-1-10h-4q0-8 3-14z" fill="#dfe5ee"/><path d="M50 51v2M62 51v2M48.500 60q8 6 15 0" fill="none" stroke="#163556" stroke-width="1.300"/></svg>
      </div>
      <!-- Trash -->
      <div class="flex w-[84px] flex-col items-center pt-[14px]">
        <svg class="size-[64px] translate-x-px overflow-visible" viewBox="0 0 64 64"><path d="M5 3l9-9 8 4 8-3 9 4 8-2 6 5 6 3-4 8H8z" fill="#e6e6e6"/><path d="M14-6l6 8M22-2l-6 10M30-5l2 10M39-1l-7 9M47-3l4 9M10 2l5 5M55 3l-6 6" stroke="#6c6c6c" stroke-width="1.800"/><path d="M22 4l5-3 3 6zM36 5l5-3 2 6z" fill="#3f8fb5"/><path d="M4 4q28 10 56 0L52 64q-2 4-20 4t-20-4z" fill="url(#gTrash)"/><path d="M4 3.500q28 10 56 0" fill="none" stroke="#fafafa" stroke-width="2"/></svg>
      </div>
    </div>
  </div>
</div>
</body>
</html>
